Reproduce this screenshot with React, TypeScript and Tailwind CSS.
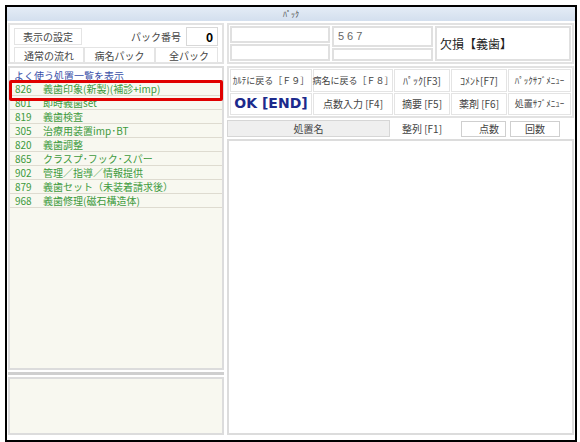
import React from "react";

const jp = { fontFamily: '"Noto Sans CJK JP", "Noto Sans", sans-serif' };

const items: [string, string][] = [
  ["826", "義歯印象(新製)(補診+imp)"],
  ["801", "即時義歯set"],
  ["819", "義歯検査"],
  ["305", "治療用装置imp･BT"],
  ["820", "義歯調整"],
  ["865", "クラスプ･フック･スパー"],
  ["902", "管理／指導／情報提供"],
  ["879", "義歯セット（未装着請求後）"],
  ["968", "義歯修理(磁石構造体)"],
];

function Btn({
  children,
  className = "",
  text = "text-[10px] text-[#444]",
}: {
  children: React.ReactNode;
  className?: string;
  text?: string;
}) {
  return (
    <div
      className={
        "flex items-center justify-center whitespace-nowrap bg-white border border-[#e4e4e4] " +
        text +
        " " +
        className
      }
    >
      {children}
    </div>
  );
}

export default function App() {
  return (
    <div className="w-[580px] h-[442px] bg-white pt-[5px] pl-[5px]" style={jp}>
      <div className="w-[572px] h-[437px] border-2 border-black flex flex-col bg-white">
        {/* Title */}
        <div className="h-[14px] flex items-center justify-center bg-gradient-to-b from-[#e4ecf6] to-[#d3dfee] text-[8px] text-[#444]">
          ﾊﾟｯｸ
        </div>

        <div className="flex-1 flex gap-[3px] pt-[2px] pb-[5px] px-[1px]">
          {/* Left column */}
          <div className="w-[216px] flex flex-col gap-[2px]">
            <div className="h-[41px] border-2 border-[#e2e2e2] flex flex-col px-[4px] pt-[2px] gap-[1px]">
              <div className="h-[19px] flex items-center">
                <Btn className="w-[68px] h-[17px]">表示の設定</Btn>
                <div className="flex-1 text-right pr-[5px] text-[10px] text-[#444]">パック番号</div>
                <div className="w-[32px] h-[19px] border border-[#d8d8d8] flex items-center justify-end pr-[4px] text-[12px] font-bold text-black">
                  0
                </div>
              </div>
              <div className="h-[16px] flex">
                <Btn className="w-[70px] h-[16px]">通常の流れ</Btn>
                <Btn className="w-[71px] h-[16px]">病名パック</Btn>
                <Btn className="flex-1 h-[16px] justify-end pr-[8px]">全パック</Btn>
              </div>
            </div>

            <div className="relative flex-1 border-2 border-[#dcdcdc] bg-[#f8f8f0] flex flex-col">
              <div className="h-[14px] bg-white flex items-center pl-[4px] text-[10px] text-[#3a4fa8]">
                よく使う処置一覧を表示
              </div>
              {items.map(([code, name]) => (
                <div
                  key={code}
                  className="h-[14px] flex items-center border-b border-[#dedbd0] text-[10px] text-[#3d9a3d]"
                >
                  <span className="w-[33px] pl-[5px]">{code}</span>
                  <span>{name}</span>
                </div>
              ))}
              <div className="absolute left-[-1px] top-[12px] w-[214px] h-[21px] border-[3px] border-[#e00000] rounded-[2px]" />
            </div>

            <div className="h-[3px] bg-[#cfcfcf]" />

            <div className="h-[58px] border-2 border-[#dcdcdc] bg-[#f8f8f0]" />
          </div>

          {/* Right column */}
          <div className="flex-1 flex flex-col gap-[2px]">
            <div className="h-[41px] border-2 border-[#e2e2e2] flex gap-[2px] p-[1px]">
              <div className="w-[100px] flex flex-col gap-[1px]">
                <div className="flex-1 border-2 border-[#e0e0e0]" />
                <div className="flex-1 border-2 border-[#e0e0e0]" />
              </div>
              <div className="w-[101px] flex flex-col gap-[1px]">
                <div
                  className="flex-1 border-2 border-[#e0e0e0] flex items-center pl-[4px] text-[11px] tracking-[3px] text-[#666]"
                  style={{ fontFamily: '"Liberation Sans", sans-serif' }}
                >
                  567
                </div>
                <div className="flex-1 border-2 border-[#e0e0e0]" />
              </div>
              <div className="flex-1 border-2 border-[#e0e0e0] flex items-center pl-[3px] text-[12px] text-[#222]">
                欠損【義歯】
              </div>
            </div>

            <div className="h-[52px] border-2 border-[#e2e2e2] grid grid-cols-[82px_80px_56px_56px_1fr] grid-rows-2 gap-[1px] p-[1px]">
              <Btn text="text-[9px] text-[#444]">ｶﾙﾃに戻る［Ｆ９］</Btn>
              <Btn text="text-[9px] text-[#444]">病名に戻る［Ｆ８］</Btn>
              <Btn>ﾊﾟｯｸ[F3]</Btn>
              <Btn>ｺﾒﾝﾄ[F7]</Btn>
              <Btn text="text-[9px] text-[#444]">ﾊﾟｯｸｻﾌﾞﾒﾆｭｰ</Btn>
              <Btn text="text-[14px] font-bold text-[#1c2a8c]">
                <span style={{ fontFamily: '"DejaVu Sans", sans-serif' }}>OK [END]</span>
              </Btn>
              <Btn>点数入力 [F4]</Btn>
              <Btn>摘要 [F5]</Btn>
              <Btn>薬剤 [F6]</Btn>
              <Btn text="text-[9px] text-[#444]">処置ｻﾌﾞﾒﾆｭｰ</Btn>
            </div>

            <div className="h-[17px] flex items-center text-[10px] text-[#444]">
              <div className="w-[163px] h-[17px] bg-[#efefef] border border-[#d6d6d6] flex items-center justify-center">
                処置名
              </div>
              <div className="w-[64px] text-center">整列 [F1]</div>
              <div className="w-[45px] h-[16px] ml-[7px] border border-[#cfcfcf] flex items-center justify-end pr-[6px]">
                点数
              </div>
              <div className="w-[50px] h-[16px] ml-[4px] border border-[#cfcfcf] flex items-center justify-center">
                回数
              </div>
            </div>

            <div className="flex-1 border-2 border-[#dcdcdc] bg-white" />
          </div>
        </div>
      </div>
    </div>
  );
}
